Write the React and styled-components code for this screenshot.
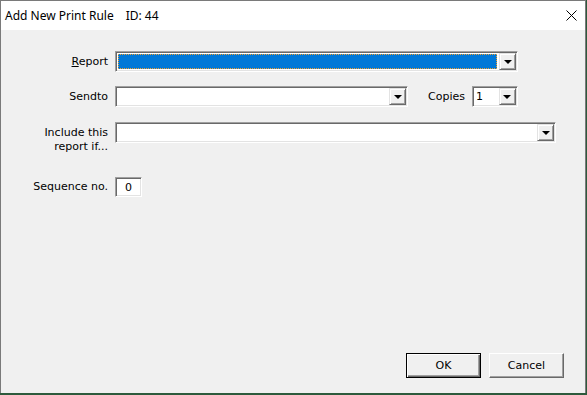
import React from "react";
import styled, { createGlobalStyle } from "styled-components";

const GlobalStyle = createGlobalStyle`
  html, body {
    margin: 0;
    padding: 0;
    background: #2d5a3c;
  }
  body {
    font-family: "DejaVu Sans", "Liberation Sans", sans-serif;
    font-size: 11px;
    color: #000;
  }
`;

const Window = styled.div`
  width: 586px;
  height: 393px;
  box-sizing: border-box;
  border: 1px solid #7a7a7a;
  border-bottom: none;
  display: flex;
  flex-direction: column;
  background: #f0f0f0;
`;

const TitleBar = styled.div`
  height: 29px;
  background: #fff;
  display: flex;
  align-items: center;
  padding-left: 4px;
  font-family: "Noto Sans", "Open Sans", sans-serif;
  font-size: 12px;
  span + span {
    margin-left: 12px;
  }
`;

const CloseButton = styled.div`
  margin-left: auto;
  width: 28px;
  height: 29px;
  display: flex;
  align-items: center;
  justify-content: center;
`;

const Body = styled.div`
  flex: 1;
  display: flex;
  flex-direction: column;
`;

const Row = styled.div`
  display: flex;
  align-items: ${(p) => (p.$top ? "flex-start" : "center")};
  margin-top: ${(p) => p.$mt}px;
`;

const Label = styled.label`
  width: 107px;
  margin-right: 7px;
  text-align: right;
  line-height: 14px;
  padding-top: ${(p) => p.$pt || 0}px;
  u {
    text-decoration: underline;
  }
`;

const InlineLabel = styled.label`
  margin-left: 20px;
  margin-right: 7px;
`;

const Sunken = styled.div`
  box-sizing: border-box;
  width: ${(p) => p.$w}px;
  height: ${(p) => p.$h || 21}px;
  border: 1px solid;
  border-color: #a0a0a0 #fff #fff #a0a0a0;
  box-shadow: inset 1px 1px 0 #696969, inset -1px -1px 0 #e3e3e3;
  background: #fff;
  padding: 1px;
  display: flex;
  align-items: stretch;
`;

const Value = styled.div`
  flex: 1;
  display: flex;
  align-items: center;
  padding-left: ${(p) => p.$pl ?? 2}px;
  justify-content: ${(p) => (p.$center ? "center" : "flex-start")};
`;

const Selected = styled.div`
  flex: 1;
  background: #0078d7;
  border: 1px dotted #f0a030;
  margin: 1px 2px 1px 1px;
`;

const DropButton = styled.div`
  box-sizing: border-box;
  width: 17px;
  border: 1px solid;
  border-color: #e3e3e3 #696969 #696969 #e3e3e3;
  box-shadow: inset 1px 1px 0 #fff, inset -1px -1px 0 #a0a0a0;
  background: #f0f0f0;
  display: flex;
  align-items: center;
  justify-content: center;
  &::after {
    content: "";
    border-left: 4px solid transparent;
    border-right: 4px solid transparent;
    border-top: 4px solid #000;
    margin-top: 1px;
  }
`;

const Footer = styled.div`
  margin-top: auto;
  display: flex;
  justify-content: flex-end;
  gap: 8px;
  padding: 0 21px 15px 0;
`;

const Button = styled.button`
  box-sizing: border-box;
  width: 75px;
  height: 25px;
  background: #f0f0f0;
  font-family: "DejaVu Sans", "Liberation Sans", sans-serif;
  font-size: 11px;
  color: #000;
  border: 1px solid;
  border-color: ${(p) =>
    p.$default ? "#000" : "#fff #696969 #696969 #fff"};
  box-shadow: ${(p) =>
    p.$default
      ? "inset 1px 1px 0 #fff, inset -1px -1px 0 #696969, inset -2px -2px 0 #a0a0a0"
      : "inset -1px -1px 0 #a0a0a0"};
  padding: 0;
`;

function Combo({ width, selected, value }) {
  return (
    <Sunken $w={width}>
      {selected ? <Selected /> : <Value>{value}</Value>}
      <DropButton />
    </Sunken>
  );
}

export default function App() {
  return (
    <>
      <GlobalStyle />
      <Window>
        <TitleBar>
          <span>Add New Print Rule</span>
          <span>ID: 44</span>
          <CloseButton>
            <svg width="11" height="11" viewBox="0 0 11 11">
              <path d="M0.5 0.5 L10.5 10.5 M10.5 0.5 L0.5 10.5" stroke="#000" strokeWidth="1" />
            </svg>
          </CloseButton>
        </TitleBar>
        <Body>
          <Row $mt={21}>
            <Label>
              <u>R</u>eport
            </Label>
            <Combo width={403} selected />
          </Row>
          <Row $mt={14}>
            <Label>Sendto</Label>
            <Combo width={293} />
            <InlineLabel>Copies</InlineLabel>
            <Combo width={46} value="1" />
          </Row>
          <Row $mt={15} $top>
            <Label $pt={4}>
              Include this
              <br />
              report if...
            </Label>
            <Combo width={441} />
          </Row>
          <Row $mt={23}>
            <Label>Sequence no.</Label>
            <Sunken $w={27} $h={20}>
              <Value $center $pl={0}>0</Value>
            </Sunken>
          </Row>
        </Body>
        <Footer>
          <Button $default>OK</Button>
          <Button>Cancel</Button>
        </Footer>
      </Window>
    </>
  );
}
